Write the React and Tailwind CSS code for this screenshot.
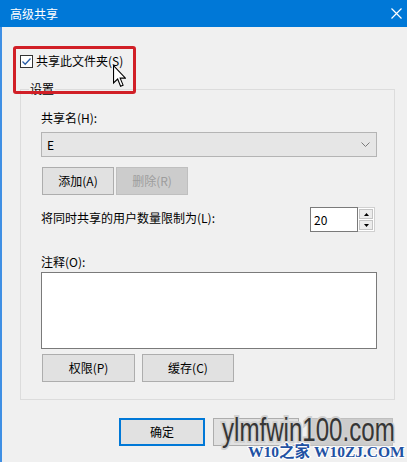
import React from 'react';

// ── Small drawings ─────────────────────────────────────────────
const CheckBox = () => (
  <span className="w-[13px] h-[13px] border border-[#333333] bg-white flex items-center justify-center">
    <svg width="11" height="11" viewBox="0 0 11 11" fill="none" stroke="#2a5ea8" strokeWidth="1.3">
      <path d="M1.5 5.5 L4.2 8.2 L9.5 2.5" />
    </svg>
  </span>
);

const Chevron = () => (
  <svg width="9" height="5" viewBox="0 0 9 5" fill="none" stroke="#7a7a7a" strokeWidth="1">
    <path d="M0.5 0.5 L4.5 4.5 L8.5 0.5" />
  </svg>
);

const Cursor = () => (
  <svg width="13" height="23" viewBox="0 0 12 21" className="absolute left-[113px] top-[65px] z-20">
    <path
      d="M0.5 0.5 L0.5 16.5 L4.3 12.8 L7 19.5 L9.3 18.5 L6.6 12 L11.5 12 Z"
      fill="#ffffff"
      stroke="#000000"
      strokeWidth="1"
      strokeLinejoin="miter"
    />
  </svg>
);

const Btn = ({ children, className = '' }) => (
  <div
    className={`h-[28px] flex items-center justify-center border text-[12px] ${className}`}
  >
    {children}
  </div>
);

export default function App() {
  return (
    <div className="relative w-[407px] h-[462px] overflow-hidden bg-[#f0f0f0] text-black font-['Noto_Sans_CJK_SC','Noto_Sans',sans-serif]">
      {/* ── Title bar ─────────────────────────────────────────── */}
      <div className="h-[27px] bg-[#0078d7] flex items-center justify-between pl-[10px] pr-[5px]">
        <span className="text-white text-[12px] leading-none">高级共享</span>
        <svg width="11" height="11" viewBox="0 0 11 11" stroke="#ffffff" strokeWidth="1.2">
          <path d="M0.5 0.5 L10.5 10.5 M10.5 0.5 L0.5 10.5" />
        </svg>
      </div>

      {/* ── Body ──────────────────────────────────────────────── */}
      <div className="h-[435px] border-l-2 border-[#3f8fe4] pl-[18px] pr-[12px] flex flex-col">
        <div className="mt-[26px] h-[16px] flex items-center gap-[3px] text-[12px]">
          <CheckBox />
          <span className="leading-[16px]">共享此文件夹(S)</span>
        </div>

        {/* Group box */}
        <div className="mt-[20px] h-[311px] border border-[#dcdcdc] pl-[20px] pr-[17px] flex flex-col">
          <div className="-mt-[9px] -ml-[12px] w-fit px-[1px] bg-[#f0f0f0] text-[12px] leading-[16px]">设置</div>

          <div className="mt-[13px] text-[12px] leading-[16px]">共享名(H):</div>
          <div className="mt-[6px] h-[25px] bg-[#e6e6e6] border border-[#b4b4b4] flex items-center justify-between pl-[5px] pr-[6px] text-[12px]">
            <span>E</span>
            <Chevron />
          </div>

          <div className="mt-[10px] flex gap-[2px]">
            <Btn className="w-[72px] ml-[1px] bg-[#e1e1e1] border-[#adadad]">添加(A)</Btn>
            <Btn className="w-[72px] bg-[#cccccc] border-[#bfbfbf] text-[#9d9d9d]">删除(R)</Btn>
          </div>

          <div className="mt-[12px] h-[25px] flex items-center justify-between">
            <span className="text-[12px] leading-[16px] -mt-[4px]">将同时共享的用户数量限制为(L):</span>
            <div className="flex h-[25px] mr-[2px]">
              <div className="w-[48px] bg-white border border-[#7a7a7a] flex items-center pl-[3px] text-[12px]">20</div>
              <div className="w-[17px] flex flex-col gap-[1px] pl-[1px] bg-white border border-l-0 border-[#d0d0d0] py-[1px] pr-[1px]">
                <div className="flex-1 bg-[#ececec] border border-[#c4c4c4] flex items-center justify-center">
                  <svg width="5" height="3" viewBox="0 0 5 3"><path d="M0 3 L2.5 0 L5 3 Z" fill="#000" /></svg>
                </div>
                <div className="flex-1 bg-[#ececec] border border-[#c4c4c4] flex items-center justify-center">
                  <svg width="5" height="3" viewBox="0 0 5 3"><path d="M0 0 L2.5 3 L5 0 Z" fill="#000" /></svg>
                </div>
              </div>
            </div>
          </div>

          <div className="mt-[22px] text-[12px] leading-[16px]">注释(O):</div>
          <div className="mt-[2px] h-[77px] bg-white border border-[#7a7a7a]" />

          <div className="mt-[5px] flex gap-[7px]">
            <Btn className="w-[93px] ml-[1px] bg-[#e1e1e1] border-[#adadad]">权限(P)</Btn>
            <Btn className="w-[92px] bg-[#e1e1e1] border-[#adadad]">缓存(C)</Btn>
          </div>
        </div>

        {/* Dialog buttons (the last two are hidden under the watermark) */}
        <div className="mt-[18px] flex justify-end gap-[8px] pr-[2px]">
          <Btn className="w-[86px] bg-[#e1e1e1] border-2 border-[#0078d7]">确定</Btn>
          <Btn className="w-[86px] bg-[#e1e1e1] border-[#adadad]" />
          <Btn className="w-[86px] bg-[#cccccc] border-[#bfbfbf]" />
        </div>
      </div>

      {/* ── Overlays ──────────────────────────────────────────── */}
      <div className="absolute left-[13px] top-[46px] w-[123px] h-[48px] border-[3px] border-[#d11f27] rounded-[3px] z-10" />
      <Cursor />

      <div className="absolute left-[222px] top-[413px] z-30 origin-left scale-x-[0.73] whitespace-nowrap text-[33px] leading-none text-[#363636] font-['Liberation_Sans',sans-serif] [paint-order:stroke_fill] [-webkit-text-stroke:4px_#d0d0d0]">
        ylmfwin100.com
      </div>
      <div className="absolute left-[248px] top-[444px] z-30 whitespace-nowrap text-[15.5px] leading-none font-bold text-[#1f52a3] font-['Liberation_Serif','Noto_Sans_CJK_SC',serif] [paint-order:stroke_fill] [-webkit-text-stroke:2px_#ffffff]">
        W10之家 W10ZJ.COM
      </div>
    </div>
  );
}
